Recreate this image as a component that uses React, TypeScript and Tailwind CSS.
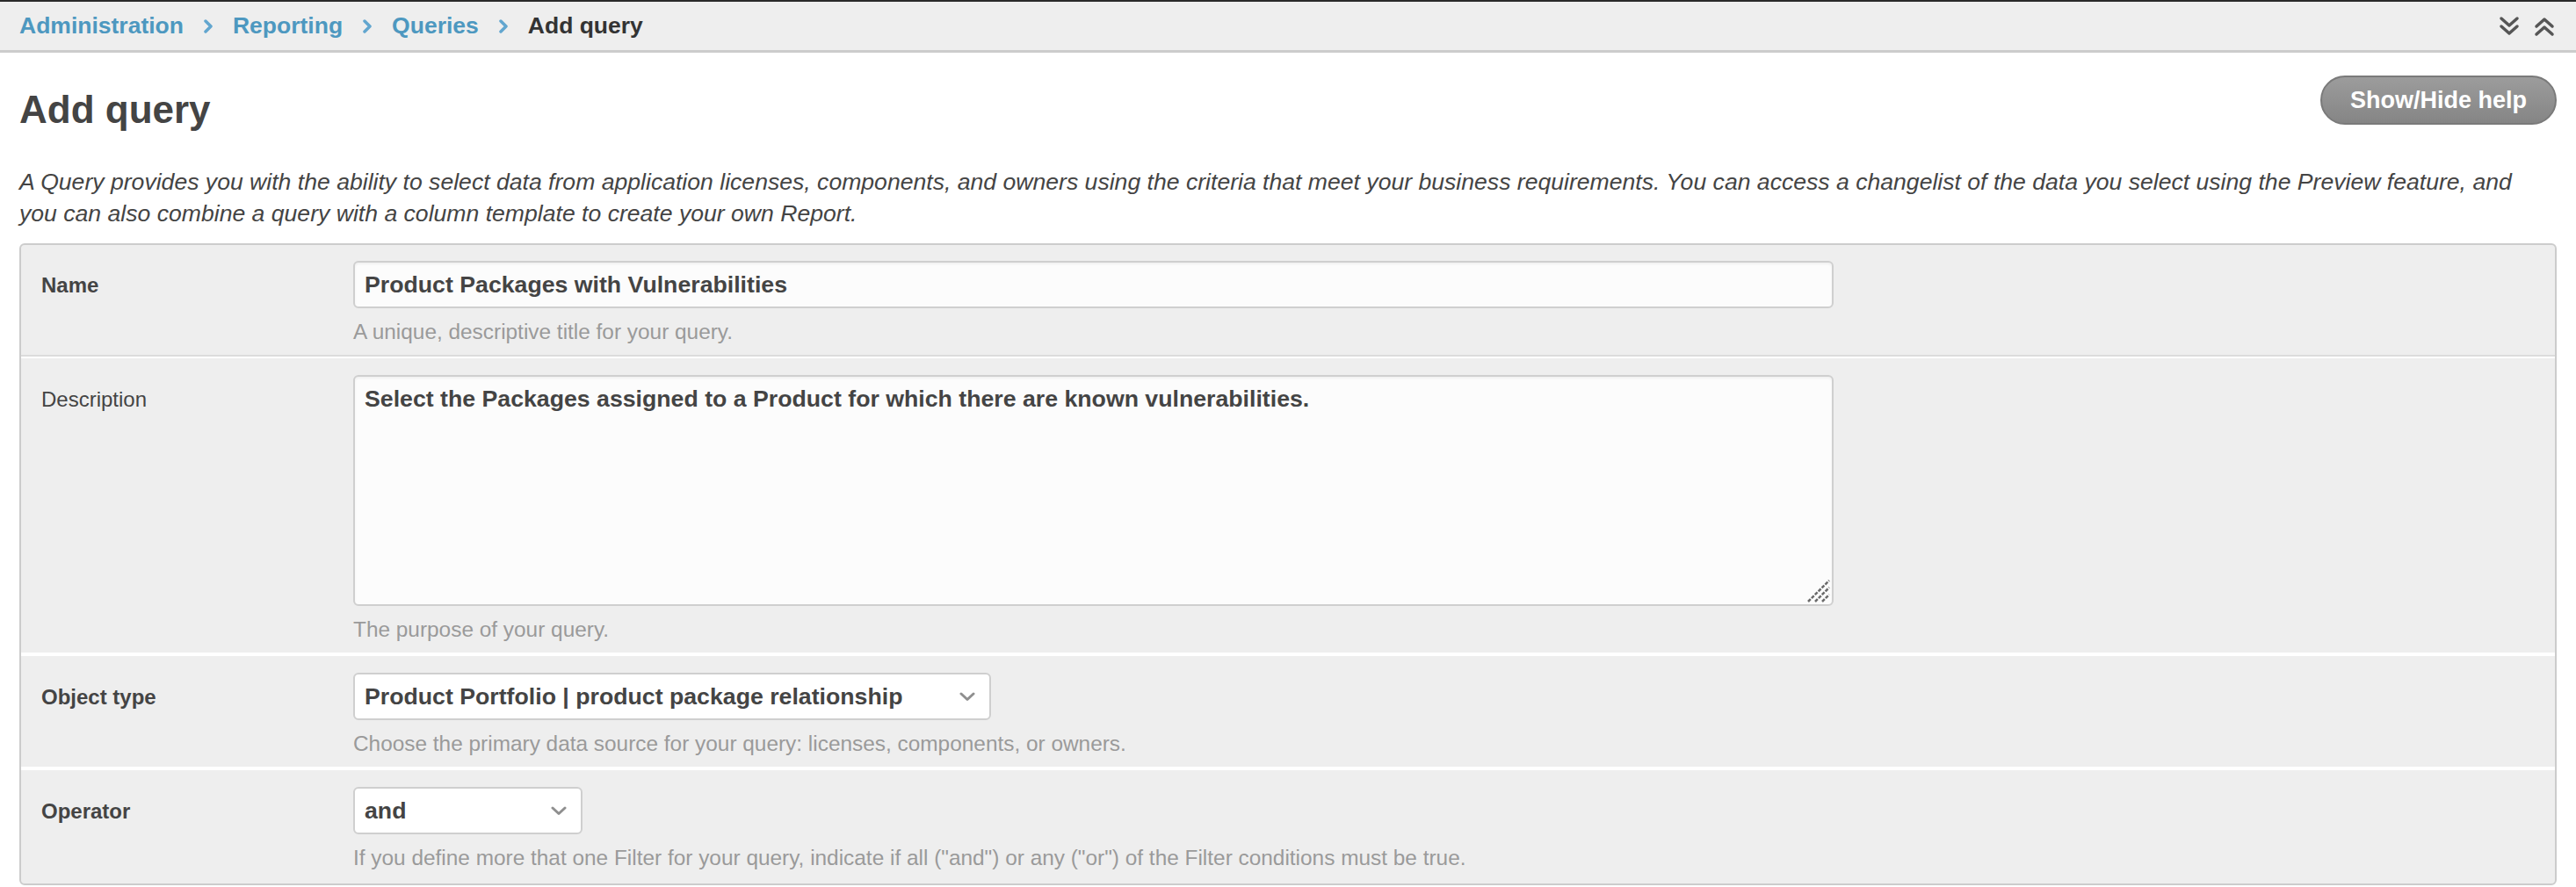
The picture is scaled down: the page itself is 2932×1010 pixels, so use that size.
import React from "react";

function Crumb({ children }: { children: React.ReactNode }) {
  return <span className="text-[#4d98c0]">{children}</span>;
}

function Sep() {
  return (
    <svg width="12" height="16" viewBox="0 0 12 16" className="shrink-0">
      <path d="M3 2 L9 8 L3 14" fill="none" stroke="#62a6cf" strokeWidth="3.5" strokeLinecap="round" strokeLinejoin="round" />
    </svg>
  );
}

function Chevron() {
  return (
    <svg width="18" height="11" viewBox="0 0 18 11" className="shrink-0">
      <path d="M2 2 L9 8.5 L16 2" fill="none" stroke="#8f8f8f" strokeWidth="3" strokeLinecap="round" strokeLinejoin="round" />
    </svg>
  );
}

function DoubleDown() {
  return (
    <svg width="24" height="24" viewBox="0 0 24 24">
      <path d="M3 3 L12 11 L21 3" fill="none" stroke="#555" strokeWidth="3.5" strokeLinecap="round" strokeLinejoin="round" />
      <path d="M3 12 L12 20 L21 12" fill="none" stroke="#555" strokeWidth="3.5" strokeLinecap="round" strokeLinejoin="round" />
    </svg>
  );
}

function DoubleUp() {
  return (
    <svg width="24" height="24" viewBox="0 0 24 24">
      <path d="M3 12 L12 4 L21 12" fill="none" stroke="#555" strokeWidth="3.5" strokeLinecap="round" strokeLinejoin="round" />
      <path d="M3 21 L12 13 L21 21" fill="none" stroke="#555" strokeWidth="3.5" strokeLinecap="round" strokeLinejoin="round" />
    </svg>
  );
}

function Row({
  label,
  bold = true,
  first = false,
  last = false,
  help,
  children,
}: {
  label: string;
  bold?: boolean;
  first?: boolean;
  last?: boolean;
  help: string;
  children: React.ReactNode;
}) {
  return (
    <div
      className={
        "flex " +
        (first ? "pt-[18px] " : "border-t-2 border-white pt-[19px] ") +
        (last ? "pb-[14px]" : "border-b-2 border-[#dcdcdc] pb-[11px]")
      }
    >
      <div className="w-[378px] shrink-0 pl-[23px]">
        <div className={"h-[56px] flex items-center text-[24px] text-[#444] " + (bold ? "font-bold" : "")}>{label}</div>
      </div>
      <div className="flex-1 min-w-0">
        {children}
        <div className="mt-[12px] leading-[30px] text-[24.4px] text-[#9a9a9a]">{help}</div>
      </div>
    </div>
  );
}

function SelectBox({ width, value }: { width: string; value: string }) {
  return (
    <div
      className={
        width +
        " h-[54px] flex items-center justify-between rounded-[6px] border-2 border-[#cfcfcf] bg-white pl-[11px] pr-[16px] text-[26.7px] font-bold text-[#444]"
      }
    >
      <span className="truncate">{value}</span>
      <Chevron />
    </div>
  );
}

export default function App() {
  return (
    <div className="min-h-[1010px] bg-white font-['Liberation_Sans',Arial,Helvetica,sans-serif] text-[#444]">
      {/* breadcrumb bar */}
      <div className="h-[60px] flex items-center justify-between border-t-2 border-[#2a2a2a] border-b-[3px] border-b-[#cccccc] bg-[#eeeeee] pl-[22px] pr-[24px]">
        <div className="flex items-center gap-[22px] text-[26.5px] font-bold leading-none">
          <Crumb>Administration</Crumb>
          <Sep />
          <Crumb>Reporting</Crumb>
          <Sep />
          <Crumb>Queries</Crumb>
          <Sep />
          <span className="text-[#333]">Add query</span>
        </div>
        <div className="flex items-center gap-[16px]">
          <DoubleDown />
          <DoubleUp />
        </div>
      </div>

      <div className="px-[22px]">
        <div className="flex items-start justify-between pt-[26px]">
          <h1 className="mt-[12px] text-[44px] leading-[54px] font-bold text-[#444]">Add query</h1>
          <button className="h-[56px] rounded-full border-2 border-[#7a7a7a] bg-gradient-to-b from-[#9c9c9c] to-[#858585] px-[32px] text-[27px] font-bold text-white">
            Show/Hide help
          </button>
        </div>

        <p className="mt-[37px] text-[26.6px] leading-[36px] italic text-[#444]">
          A Query provides you with the ability to select data from application licenses, components, and owners using the criteria that meet your business requirements. You can access a changelist of the data you select using the Preview feature, and
          <br />
          you can also combine a query with a column template to create your own Report.
        </p>

        <div className="mt-[16px] rounded-[6px] border-2 border-[#cccccc] bg-[#eeeeee]">
          <Row label="Name" first help="A unique, descriptive title for your query.">
            <div className="w-[1685px] h-[54px] flex items-center rounded-[6px] border-2 border-[#cfcfcf] bg-[#fcfcfc] px-[11px] text-[26.7px] font-bold text-[#444] shadow-[inset_0_2px_3px_rgba(0,0,0,0.05)]">
              Product Packages with Vulnerabilities
            </div>
          </Row>
          <Row label="Description" bold={false} help="The purpose of your query.">
            <div className="relative w-[1685px]">
              <textarea
                readOnly
                className="block w-[1685px] h-[263px] resize-none rounded-[6px] border-2 border-[#cfcfcf] bg-[#fcfcfc] px-[11px] py-[10px] text-[26.7px] leading-[30px] font-bold text-[#444] shadow-[inset_0_2px_3px_rgba(0,0,0,0.05)] outline-none"
                defaultValue="Select the Packages assigned to a Product for which there are known vulnerabilities."
              />
              <svg width="28" height="28" viewBox="0 0 28 28" className="absolute right-[3px] bottom-[3px]">
                <path d="M2 26 L26 2" stroke="#6b6b6b" strokeWidth="2.5" strokeDasharray="4 1.5" />
                <path d="M10 26 L26 10" stroke="#6b6b6b" strokeWidth="2.5" strokeDasharray="4 1.5" />
                <path d="M18 26 L26 18" stroke="#6b6b6b" strokeWidth="2.5" strokeDasharray="4 1.5" />
              </svg>
            </div>
          </Row>
          <Row label="Object type" help="Choose the primary data source for your query: licenses, components, or owners.">
            <SelectBox width="w-[726px]" value="Product Portfolio | product package relationship" />
          </Row>
          <Row label="Operator" last help={'If you define more that one Filter for your query, indicate if all ("and") or any ("or") of the Filter conditions must be true.'}>
            <SelectBox width="w-[261px]" value="and" />
          </Row>
        </div>
      </div>
    </div>
  );
}
